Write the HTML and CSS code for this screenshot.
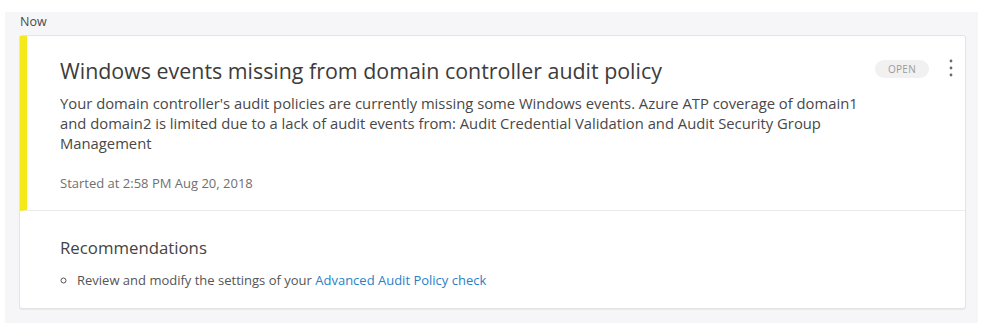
FILE: index.html
```html
<!DOCTYPE html>
<html lang="en">
<head>
    <meta charset="UTF-8">
    <meta name="viewport" content="width=device-width, initial-scale=1.0">
    <link rel="stylesheet" href="styles.css">
    <title>Health alerts</title>
</head>
<body>

    <!-- Timeline group -->
    <div class="alert-group">
        <div class="group-label">Now</div>

        <!-- Alert card -->
        <div class="alert-card">
            <div class="alert-main">
                <div class="alert-body">
                    <div class="alert-title">Windows events missing from domain controller audit policy</div>
                    <div class="alert-text">Your domain controller's audit policies are currently missing some Windows events. Azure ATP coverage of domain1 and domain2 is limited due to a lack of audit events from: Audit Credential Validation and Audit Security Group Management</div>
                    <div class="alert-time">Started at 2:58 PM Aug 20, 2018</div>
                </div>
                <div class="alert-actions">
                    <span class="status-pill">OPEN</span>
                    <button class="more-button" aria-label="More">
                        <svg width="4" height="18" viewBox="0 0 4 18"><circle cx="2" cy="2" r="1.4"/><circle cx="2" cy="9" r="1.4"/><circle cx="2" cy="16" r="1.4"/></svg>
                    </button>
                </div>
            </div>

            <div class="alert-recs">
                <div class="recs-title">Recommendations</div>
                <ul class="recs-list">
                    <li>Review and modify the settings of your <a href="#">Advanced Audit Policy check</a></li>
                </ul>
            </div>
        </div>
    </div>

</body>
</html>
```

FILE: styles.css
```css
body {
    margin: 0;
    background-color: #ffffff;
    font-family: 'Open Sans', 'Noto Sans', sans-serif;
    color: #444444;
}

/* Grey group panel */
.alert-group {
    margin: 12px 21px 0 5px;
    padding: 0 12px 14px 14px;
    background-color: #f6f6f8;
}

.group-label {
    height: 23px;
    padding-left: 1px;
    font-size: 12.5px;
    line-height: 20px;
    color: #4a4a4a;
}

/* Card */
.alert-card {
    background-color: #ffffff;
    border: 1px solid #e4e4e6;
    border-radius: 3px;
    box-shadow: 0 1px 1px rgba(0, 0, 0, 0.06);
}

.alert-main {
    display: flex;
    border-left: 7px solid #f4e91a;
    border-bottom: 1px solid #ececee;
    padding: 20px 0 19px 33px;
}

.alert-body {
    flex: 1;
}

.alert-title {
    font-size: 21.4px;
    line-height: 30px;
    color: #3c3c3c;
    margin-bottom: 7px;
}

.alert-text {
    font-size: 14.8px;
    line-height: 20px;
    color: #484848;
    max-width: 810px;
}

.alert-time {
    margin-top: 22px;
    font-size: 13px;
    line-height: 16px;
    color: #707070;
}

.alert-actions {
    display: flex;
    align-items: flex-start;
    gap: 16px;
    padding: 3px 8px 0 0;
}

.status-pill {
    margin-top: 1px;
    background-color: #f1f1f2;
    border-radius: 9px;
    padding: 1px 13px;
    font-size: 10px;
    line-height: 16px;
    color: #9a9a9a;
    letter-spacing: 0.3px;
}

.more-button {
    background: none;
    border: none;
    padding: 0 4px;
    fill: #6a6a6a;
    cursor: pointer;
}

/* Recommendations */
.alert-recs {
    padding: 26px 0 20px 40px;
}

.recs-title {
    font-size: 16.8px;
    line-height: 22px;
    color: #444444;
}

.recs-list {
    margin: 13px 0 0 0;
    padding-left: 17px;
    list-style-type: circle;
    font-size: 13px;
    line-height: 16px;
    color: #555555;
}

.recs-list a {
    color: #2a7fc9;
    text-decoration: none;
}
```
